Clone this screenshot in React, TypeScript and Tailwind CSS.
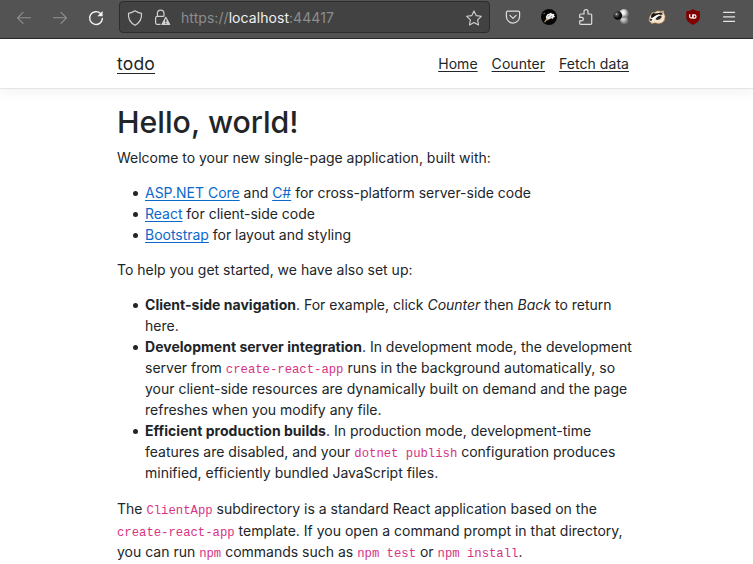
import type { ReactNode } from "react";

function Code({ children }: { children: ReactNode }) {
  return (
    <code className="font-['Liberation_Mono',monospace] text-[12.25px] leading-[0] text-[#d63384] [overflow-wrap:break-word]">
      {children}
    </code>
  );
}

function Item({ children }: { children: ReactNode }) {
  return (
    <li className="before:-ml-3 before:mr-[7px] before:inline-block before:size-[5px] before:rounded-full before:bg-[#212529] before:align-[2px] before:content-['']">
      {children}
    </li>
  );
}

function Strong({ children }: { children: ReactNode }) {
  return <strong className="tracking-[0.02px]">{children}</strong>;
}

function Link({ children }: { children: ReactNode }) {
  return <a href="#" className="text-[#0b69cc] underline decoration-1 underline-offset-2 [text-decoration-skip-ink:none]">{children}</a>;
}

function Toolbar() {
  return (
    <div className="flex h-[39px] items-start border-b border-[#2a292f] bg-[#535353] text-[#dedede]">
      <svg className="ml-[16px] mt-[9px] size-4 text-[#919191]" viewBox="0 0 16 16" fill="none" stroke="currentColor" strokeWidth="1.1" strokeLinecap="round" strokeLinejoin="round">
        <path d="M14.5 8.8H1.5M7 3.3 1.5 8.8 7 14.3" />
      </svg>
      <svg className="ml-[20px] mt-[9px] size-4 text-[#919191]" viewBox="0 0 16 16" fill="none" stroke="currentColor" strokeWidth="1.1" strokeLinecap="round" strokeLinejoin="round">
        <path d="M1.5 8.8h13M9 3.3l5.5 5.5L9 14.3" />
      </svg>
      <svg className="ml-[20px] mt-[10px] size-4 text-[#f3f3f3]" viewBox="0 0 16 16" fill="none" stroke="currentColor" strokeWidth="1.4" strokeLinecap="round">
        <path d="M12.6 3.6A6.4 6.4 0 1 0 14.4 8.4" />
        <path d="M14.6 1v5.2H9.4Z" fill="currentColor" stroke="none" />
      </svg>
      <div className="ml-[15px] mt-px flex h-8 w-[371px] items-center rounded-[4px] border border-[#2d2d2d] bg-[#424242] pl-[7px] pr-[7px]">
        <svg className="mt-px size-4 shrink-0 text-[#d0d0d0]" viewBox="0 0 16 16" fill="none" stroke="currentColor" strokeWidth="1.2" strokeLinejoin="round">
          <path d="M8 .8c2 1.600 4.200 2.300 6.500 2.500.5 5.200-1.300 9.200-6.500 12-5.200-2.800-7-6.800-6.500-12C3.800 3.100 6 2.400 8 .8Z" />
        </svg>
        <svg className="ml-[11px] mt-px h-[17px] w-[17px] shrink-0 text-[#d0d0d0]" viewBox="0 0 17 17" fill="none" stroke="currentColor" strokeWidth="1.2" strokeLinejoin="round">
          <path d="M6.500 15.400H3.200A1.600 1.600 0 0 1 1.600 13.800V9A1.600 1.600 0 0 1 3.200 7.400h6.600M3.400 7.300V4.400a3.300 3.300 0 0 1 6.600 0v3.200" />
          <path d="m11.800 8.400 3.900 7.100H7.900Z" fill="currentColor" />
          <path d="M11.800 10.200v2.700M11.800 13.700v1" stroke="#424242" strokeWidth="1.300" />
        </svg>
        <div className="ml-[10px] mt-[2px] flex-1 whitespace-nowrap text-[14px] leading-5 tracking-[0.06px] text-[#8d8d8d]">
          https://<span className="text-[#f0f0f0]">localhost</span>:44417
        </div>
        <svg className="mt-px size-4 shrink-0 text-[#d0d0d0]" viewBox="0 0 16 16" fill="none" stroke="currentColor" strokeWidth="1.100" strokeLinejoin="round">
          <path d="m8 .9 2.200 4.700 5.100.7-3.700 3.500.9 5.100L8 12.400l-4.500 2.500.9-5.100L.7 6.300l5.100-.7Z" />
        </svg>
      </div>
      <svg className="ml-[15px] mt-[9px] size-4" viewBox="0 0 16 16" fill="none" stroke="currentColor" strokeWidth="1.200" strokeLinecap="round" strokeLinejoin="round">
        <path d="M2.600 2.200h10.800a1.200 1.200 0 0 1 1.200 1.200V7.500a6.600 6.600 0 0 1-13.200 0V3.400a1.200 1.200 0 0 1 1.200-1.200Z" />
        <path d="m4.900 6.400 3.100 3 3.100-3" />
      </svg>
      <svg className="ml-[20px] mt-[9px] size-4" viewBox="0 0 16 16">
        <circle cx="8" cy="8" r="8" fill="#050505" />
        <path d="m4.800 7.800 1.500-2.500 2.200-.8 1.600-.7.8 1 2.700.2-.7 1.200 1.300 1.800-2 .4-.1 1.500-2-.6-2.200 1.200-2.500-.5Z" fill="#eee" />
        <path d="m6.600 7.300 1.800-.9M9.500 8.300l1.300-1" stroke="#666" strokeWidth=".8" />
        <path d="m3.200 12.800 2.600-3.500 2 .5-1 1.500-1.800.5-.8 1.800Z" fill="#d7b582" />
        <path d="m2 4.900 1.900-1.500-.4 1.700Z" fill="#999" />
      </svg>
      <svg className="ml-[20px] mt-[9px] size-4" viewBox="0 0 16 16" fill="none" stroke="currentColor" strokeWidth="1.200" strokeLinejoin="round">
        <path d="M3.700 5H7V2.600a2 2 0 0 1 4 0V5h2.700a1 1 0 0 1 1 1v8.300a1 1 0 0 1-1 1H3.700a1 1 0 0 1-1-1v-2.500h2a1.700 1.700 0 0 0 0-3.400h-2V6a1 1 0 0 1 1-1Z" />
      </svg>
      <svg className="ml-[20px] mt-[8px] size-4" viewBox="0 0 16 16">
        <defs>
          <radialGradient id="dark" cx="35%" cy="35%"><stop stopColor="#ddd" /><stop offset=".3" stopColor="#555" /><stop offset="1" stopColor="#080808" /></radialGradient>
          <radialGradient id="light" cx="40%" cy="40%"><stop stopColor="#fff" /><stop offset=".5" stopColor="#ddd" /><stop offset="1" stopColor="#858585" /></radialGradient>
        </defs>
        <circle cx="11.200" cy="12" r="4" fill="url(#light)" opacity=".75" />
        <circle cx="11" cy="5.500" r="4.600" fill="url(#light)" />
        <circle cx="4.800" cy="7.500" r="4.300" fill="url(#dark)" />
      </svg>
      <svg className="ml-[19px] mt-[9px] h-4 w-[18px]" viewBox="0 0 18 16" strokeLinejoin="round">
        <path d="m.9 11.500 1-4 2.400-4 2 .3L9.500 2l3.300.4 2.700-.5.2 2.200 1.300 3.200-.7 4-2.300 2.500-3.500.6-3.500-.7-3.200.7Z" fill="#f5e3cb" stroke="#d49a5b" strokeWidth=".6" />
        <path d="m3.500 5.600 1.700-1.500 2.300.4 5.700-1 1.800 2-2 .2-2.400-.5-3.600 1.800-2.800 1.900-1.300-.3Z" fill="#171717" />
        <path d="m7.400 10 2.200-2.400 3.300-1 .9 1.400-1.900 2.300-3 .8Z" fill="#292929" />
        <path d="m1.700 10.700 3.400-2.200 3.600-2.200 2.800-.4-3.300 2.600-2.500 3Z" fill="#fff" />
        <path d="m1 11 1.900-1.500 1.500 1.100-1.100 1.500Z" fill="#303030" />
        <path d="m13.600 3.500.9-.5.2 1Z" fill="#222" />
      </svg>
      <svg className="ml-[19px] mt-[9px] size-4" viewBox="0 0 16 16">
        <path d="M8 0c2 1.600 4.200 2.200 6.800 2.200V8c0 4.500-3.600 6.200-6.800 8-3.200-1.800-6.800-3.500-6.800-8V2.200C3.800 2.200 6 1.600 8 0Z" fill="#800000" />
        <path d="M4.700 5.300V7.600a1.500 1.500 0 0 0 3 0V5.300M8.100 5.900h1.300a1.600 1.600 0 0 1 0 3.200H8.100Z" fill="none" stroke="#fff" strokeWidth="1.200" />
      </svg>
      <svg className="ml-[20px] mt-[9px] size-4" viewBox="0 0 16 16" stroke="#e5e5e5" strokeWidth="1.200" strokeLinecap="round">
        <path d="M2.600 3.400h11M2.600 7.900h11M2.600 12.300h11" />
      </svg>
    </div>
  );
}

export default function App() {
  return (
    <div className="h-[564px] overflow-hidden bg-white font-['Inter',sans-serif] text-[14px] leading-[21px] text-[#212529]">
      <Toolbar />
      <header className="mb-[15px] h-[50px] border-b border-[#e5e5e5] shadow-[0_3.5px_10.5px_rgba(0,0,0,0.05)]">
        <nav className="mx-auto flex h-full w-[519px] items-center justify-between">
          <a href="#" className="text-[17.5px] leading-[26px] tracking-[0.2px] underline decoration-1 underline-offset-[3px]">todo</a>
          <div className="flex gap-[14px] pr-[7px] tracking-[0.05px]">
            <a href="#" className="underline decoration-1 underline-offset-2">Home</a>
            <a href="#" className="underline decoration-1 underline-offset-2">Counter</a>
            <a href="#" className="underline decoration-1 underline-offset-2">Fetch data</a>
          </div>
        </nav>
      </header>
      <main className="mx-auto w-[519px]">
        <h1 className="mb-[7px] text-[30.3px] font-medium leading-[36.4px]">Hello, world!</h1>
        <p className="mb-[14px] tracking-[-0.015px]">Welcome to your new single-page application, built with:</p>
        <ul className="mb-[14px] pl-7 tracking-[-0.02px]">
          <Item><Link>ASP.NET Core</Link> and <Link>C#</Link> for cross-platform server-side code</Item>
          <Item><Link>React</Link> for client-side code</Item>
          <Item><Link>Bootstrap</Link> for layout and styling</Item>
        </ul>
        <p className="mb-[14px]">To help you get started, we have also set up:</p>
        <ul className="mb-[15px] pl-7">
          <Item><Strong>Client-side navigation</Strong>. For example, click <em>Counter</em> then <em>Back</em> to return here.</Item>
          <Item><Strong>Development server integration</Strong>. In development mode, the development server from <Code>create-react-app</Code> runs in the background automatically, so your client-side resources are dynamically built on demand and the page refreshes when you modify any file.</Item>
          <Item><Strong>Efficient production builds</Strong>. In production mode, development-time features are disabled, and your <Code>dotnet publish</Code> configuration produces minified, efficiently bundled JavaScript files.</Item>
        </ul>
        <p className="leading-[21.5px]">The <Code>ClientApp</Code> subdirectory is a standard React application based on the <Code>create-react-app</Code> template. If you open a command prompt in that directory, you can run <Code>npm</Code> commands such as <Code>npm test</Code> or <Code>npm install</Code>.</p>
      </main>
    </div>
  );
}
